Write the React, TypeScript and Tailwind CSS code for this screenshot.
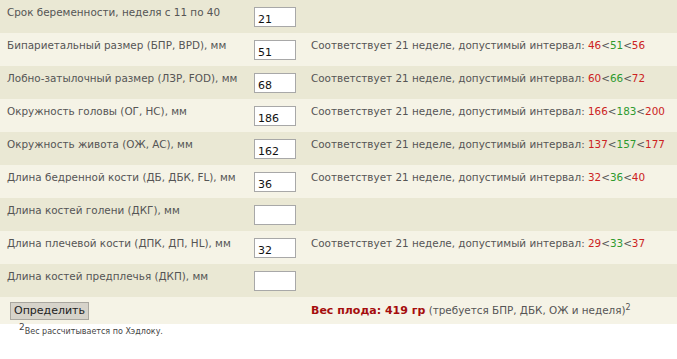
const rows = [
  { label: "Срок беременности, неделя с 11 по 40", value: "21" },
  { label: "Бипариетальный размер (БПР, BPD), мм", value: "51", range: ["46", "51", "56"] },
  { label: "Лобно-затылочный размер (ЛЗР, FOD), мм", value: "68", range: ["60", "66", "72"] },
  { label: "Окружность головы (ОГ, HC), мм", value: "186", range: ["166", "183", "200"] },
  { label: "Окружность живота (ОЖ, AC), мм", value: "162", range: ["137", "157", "177"] },
  { label: "Длина бедренной кости (ДБ, ДБК, FL), мм", value: "36", range: ["32", "36", "40"] },
  { label: "Длина костей голени (ДКГ), мм", value: "" },
  { label: "Длина плечевой кости (ДПК, ДП, HL), мм", value: "32", range: ["29", "33", "37"] },
  { label: "Длина костей предплечья (ДКП), мм", value: "" },
];

export default function App() {
  return (
    <div className="w-[677px] h-[359px] bg-white text-[#555] font-['DejaVu_Sans',sans-serif] text-[10.4px] leading-[13px]">
      {rows.map((row, i) => (
        <div
          key={i}
          className={`flex items-start h-[33px] ${i % 2 === 0 ? "bg-[#eae8d4]" : "bg-[#f5f3e6]"}`}
        >
          <div className="w-[254px] pl-[7px] pt-[6px] whitespace-nowrap">{row.label}</div>
          <input
            readOnly
            value={row.value}
            className="mt-[7px] w-[42px] h-[20px] border border-[#a8a8a8] bg-white px-[3px] pt-[4px] text-[11px] text-[#111] outline-none"
          />
          {row.range && (
            <div className="ml-[15px] pt-[6px] whitespace-nowrap">
              Соответствует 21 неделе, допустимый интервал:{" "}
              <span className="text-[#cc2222]">{row.range[0]}</span>&lt;
              <span className="text-[#2e9a2e]">{row.range[1]}</span>&lt;
              <span className="text-[#cc2222]">{row.range[2]}</span>
            </div>
          )}
        </div>
      ))}
      <div className="flex items-center h-[27px] bg-[#f5f3e6]">
        <div className="w-[311px] pl-[10px]">
          <button className="w-[79px] h-[18px] bg-[#d6d3ca] border border-[#a9a79f] text-[#222] text-[11px] leading-none">
            Определить
          </button>
        </div>
        <div className="whitespace-nowrap">
          <span className="font-bold text-[#a50d0d] text-[11px]">Вес плода: 419 гр</span>{" "}
          (требуется БПР, ДБК, ОЖ и неделя)<sup className="text-[8px]">2</sup>
        </div>
      </div>
      <div className="pl-[19px] pt-[3px] text-[8px] leading-[10px] text-[#444]">
        <sup className="text-[9px]">2</sup>Вес рассчитывается по Хэдлоку.
      </div>
    </div>
  );
}
